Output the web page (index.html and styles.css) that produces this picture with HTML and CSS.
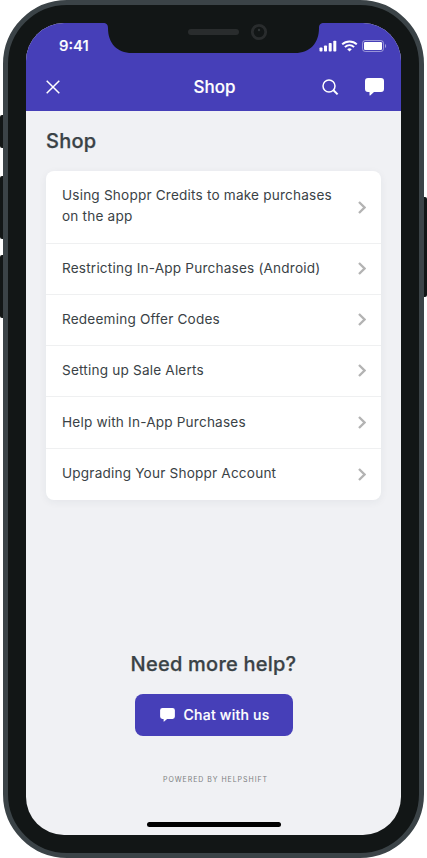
FILE: index.html
```html
<!DOCTYPE html>
<html lang="en">
<head>
<meta charset="utf-8">
<title>Shop</title>
<link rel="stylesheet" href="styles.css">
</head>
<body>
<div class="stage">
  <span class="key key-mute"></span>
  <span class="key key-up"></span>
  <span class="key key-down"></span>
  <span class="key key-power"></span>
  <div class="phone">
    <div class="screen">
      <svg class="notch" width="221" height="31" viewBox="0 0 221 31">
        <path fill="#121616" d="M0 0V1C3.500 1 5 2.500 5 6C5 21 14 31 29 31H192C207 31 216 21 216 6C216 2.500 217.500 1 221 1V0Z"/>
        <rect x="85" y="7" width="51" height="6" rx="3" fill="#292c2d"/>
        <circle cx="156" cy="10" r="6.700" fill="#121616" stroke="#292c2d" stroke-width="2.800"/>
        <circle cx="156" cy="8" r="1.200" fill="#303536"/>
      </svg>
      <header class="top">
        <div class="status">
          <span class="time">9:41</span>
          <svg class="signals" width="68" height="12" viewBox="0 0 68 12" fill="#fff">
            <rect x="0.500" y="7.500" width="3" height="4" rx="0.800"/>
            <rect x="5" y="5.500" width="3" height="6" rx="0.800"/>
            <rect x="9.700" y="3" width="3" height="8.500" rx="0.800"/>
            <rect x="14.300" y="0.700" width="3" height="10.800" rx="0.800"/>
            <g fill="none" stroke="#fff" stroke-width="2">
              <path d="M23.200 4.400C27.200 0.500 33.800 0.500 37.800 4.400"/>
              <path d="M25.900 7.100C28.600 4.500 32.400 4.500 35.100 7.100"/>
            </g>
            <path d="M28.200 9.200C29.500 8 31.500 8 32.800 9.200L30.500 11.500Z"/>
            <rect x="43.500" y="0.500" width="21" height="11" rx="2.800" fill="none" stroke="#fff" stroke-opacity="0.450"/>
            <rect x="45" y="2" width="18" height="8" rx="1.300"/>
            <path fill-opacity="0.500" d="M66 4V8C67.500 7.300 67.500 4.700 66 4Z"/>
          </svg>
        </div>
        <div class="nav">
          <svg class="close" width="14" height="14" viewBox="0 0 14 14"><path d="M0.700 0.700L13.300 13.300M13.300 0.700L0.700 13.300" stroke="#fff" stroke-width="1.500"/></svg>
          <span class="nav-title">Shop</span>
          <svg class="search" width="17" height="17" viewBox="0 0 17 17" fill="none" stroke="#fff"><circle cx="7" cy="7" r="6" stroke-width="1.500"/><path d="M11.500 11.300L15.600 15.400" stroke-width="2"/></svg>
          <svg class="bubble" width="19" height="18" viewBox="0 0 19 18" fill="#fff"><path d="M3 0H16Q19 0 19 3V11Q19 14 16 14H9L5.200 17.500Q4.500 17.800 4.500 17V14H3Q0 14 0 11V3Q0 0 3 0Z"/></svg>
        </div>
      </header>
      <main class="content">
        <h1 class="heading">Shop</h1>
        <ul class="list">
          <li class="row row-tall"><span>Using Shoppr Credits to make purchases<br>on the app</span><svg class="chevron" viewBox="0 0 8 13"><path d="M1 1L6.500 6.500L1 12"/></svg></li>
          <li class="row"><span>Restricting In-App Purchases (Android)</span><svg class="chevron" viewBox="0 0 8 13"><path d="M1 1L6.500 6.500L1 12"/></svg></li>
          <li class="row"><span>Redeeming Offer Codes</span><svg class="chevron" viewBox="0 0 8 13"><path d="M1 1L6.500 6.500L1 12"/></svg></li>
          <li class="row"><span>Setting up Sale Alerts</span><svg class="chevron" viewBox="0 0 8 13"><path d="M1 1L6.500 6.500L1 12"/></svg></li>
          <li class="row row-mid"><span>Help with In-App Purchases</span><svg class="chevron" viewBox="0 0 8 13"><path d="M1 1L6.500 6.500L1 12"/></svg></li>
          <li class="row row-last"><span>Upgrading Your Shoppr Account</span><svg class="chevron" viewBox="0 0 8 13"><path d="M1 1L6.500 6.500L1 12"/></svg></li>
        </ul>
      </main>
      <footer class="help">
        <h2 class="help-title">Need more help?</h2>
        <button class="chat"><svg width="15" height="14" viewBox="0 0 19 18" fill="#fff"><path d="M3 0H16Q19 0 19 3V11Q19 14 16 14H9L5.200 17.500Q4.500 17.800 4.500 17V14H3Q0 14 0 11V3Q0 0 3 0Z"/></svg><span>Chat with us</span></button>
        <p class="powered">POWERED BY HELPSHIFT</p>
        <div class="home-bar"></div>
      </footer>
    </div>
  </div>
</div>
</body>
</html>
```
FILE: styles.css
```css
* { box-sizing: border-box; }
body { margin: 0; background: #fff; font-family: Inter, "Liberation Sans", sans-serif; color: #3a4246; overflow: hidden; }
.stage { position: relative; width: 427px; height: 858px; padding: 0 3px; }
.key { position: absolute; width: 6px; background: #121616; border-radius: 2px; }
.key-mute { left: 0; top: 115px; height: 33px; }
.key-up { left: 0; top: 176px; height: 63px; }
.key-down { left: 0; top: 255px; height: 63px; }
.key-power { right: 0; top: 197px; height: 100px; }
.phone { position: relative; width: 421px; height: 858px; padding: 18px; border: 5px solid #3b4347; border-radius: 64px; background: #121616; }
.screen { position: relative; display: flex; flex-direction: column; width: 375px; height: 812px; border-radius: 38px; background: #f0f1f4; overflow: hidden; }
.notch { position: absolute; left: 77px; top: -1px; }
.top { height: 88px; background: #463fb8; color: #fff; }
.status { display: flex; justify-content: space-between; align-items: center; height: 45px; padding: 0 14px 0 33px; }
.time { font-size: 15px; font-weight: 500; letter-spacing: 0; -webkit-text-stroke: 0.200px #fff; }
.signals { margin-top: 1px; }
.nav { display: grid; grid-template-columns: 34px 1fr 34px 29px; align-items: center; height: 38px; padding: 0 17px 0 20px; }
.nav-title { padding-left: 28px; padding-bottom: 1px; text-align: center; font-size: 17px; font-weight: 500; letter-spacing: 0; -webkit-text-stroke: 0.150px #fff; }
.close { display: block; }
.search { justify-self: start; margin-left: 1px; }
.bubble { justify-self: end; }
.content { padding: 17px 20px 0; }
.heading { margin: 0 0 17px; height: 26px; line-height: 26px; font-size: 20px; font-weight: 500; letter-spacing: 0.250px; -webkit-text-stroke: 0.250px #3a4246; }
.list { margin: 0; padding: 0; list-style: none; background: #fff; border-radius: 8px; box-shadow: 0 2px 8px rgba(40, 50, 60, 0.060); }
.row { display: flex; align-items: center; justify-content: space-between; height: 51px; padding: 0 15px 1px 16px; border-bottom: 1px solid #eff0f1; font-size: 13.600px; line-height: 21px; letter-spacing: 0.190px; }
.row-tall { height: 73px; padding-bottom: 2px; }
.row-mid { height: 52px; padding-bottom: 0; }
.row-last { padding-bottom: 3px; border-bottom: 0; }
.chevron { width: 8px; height: 13px; flex: none; fill: none; stroke: #b3b3b3; stroke-width: 2.300; }
.row-tall .chevron { margin-top: 2px; }
.row-last .chevron { margin-top: 2px; }
.help { display: flex; flex-direction: column; align-items: center; margin-top: auto; padding-bottom: 8px; }
.help-title { margin: 0 0 17px; height: 26px; line-height: 26px; font-size: 20px; font-weight: 500; letter-spacing: 0.230px; -webkit-text-stroke: 0.250px #3a4246; }
.chat { display: flex; align-items: center; justify-content: center; gap: 9px; width: 158px; height: 42px; padding: 0 0 1px 2px; border: 0; border-radius: 8px; background: #463fb8; color: #fff; font: 500 14px Inter, "Liberation Sans", sans-serif; letter-spacing: 0.220px; -webkit-text-stroke: 0.150px #fff; }
.powered { margin: 38px 0 36px; padding-left: 4px; height: 12px; line-height: 12px; font-size: 7px; letter-spacing: 0.950px; color: #7c7e80; }
.home-bar { width: 134px; height: 5px; border-radius: 3px; background: #000; }
```
